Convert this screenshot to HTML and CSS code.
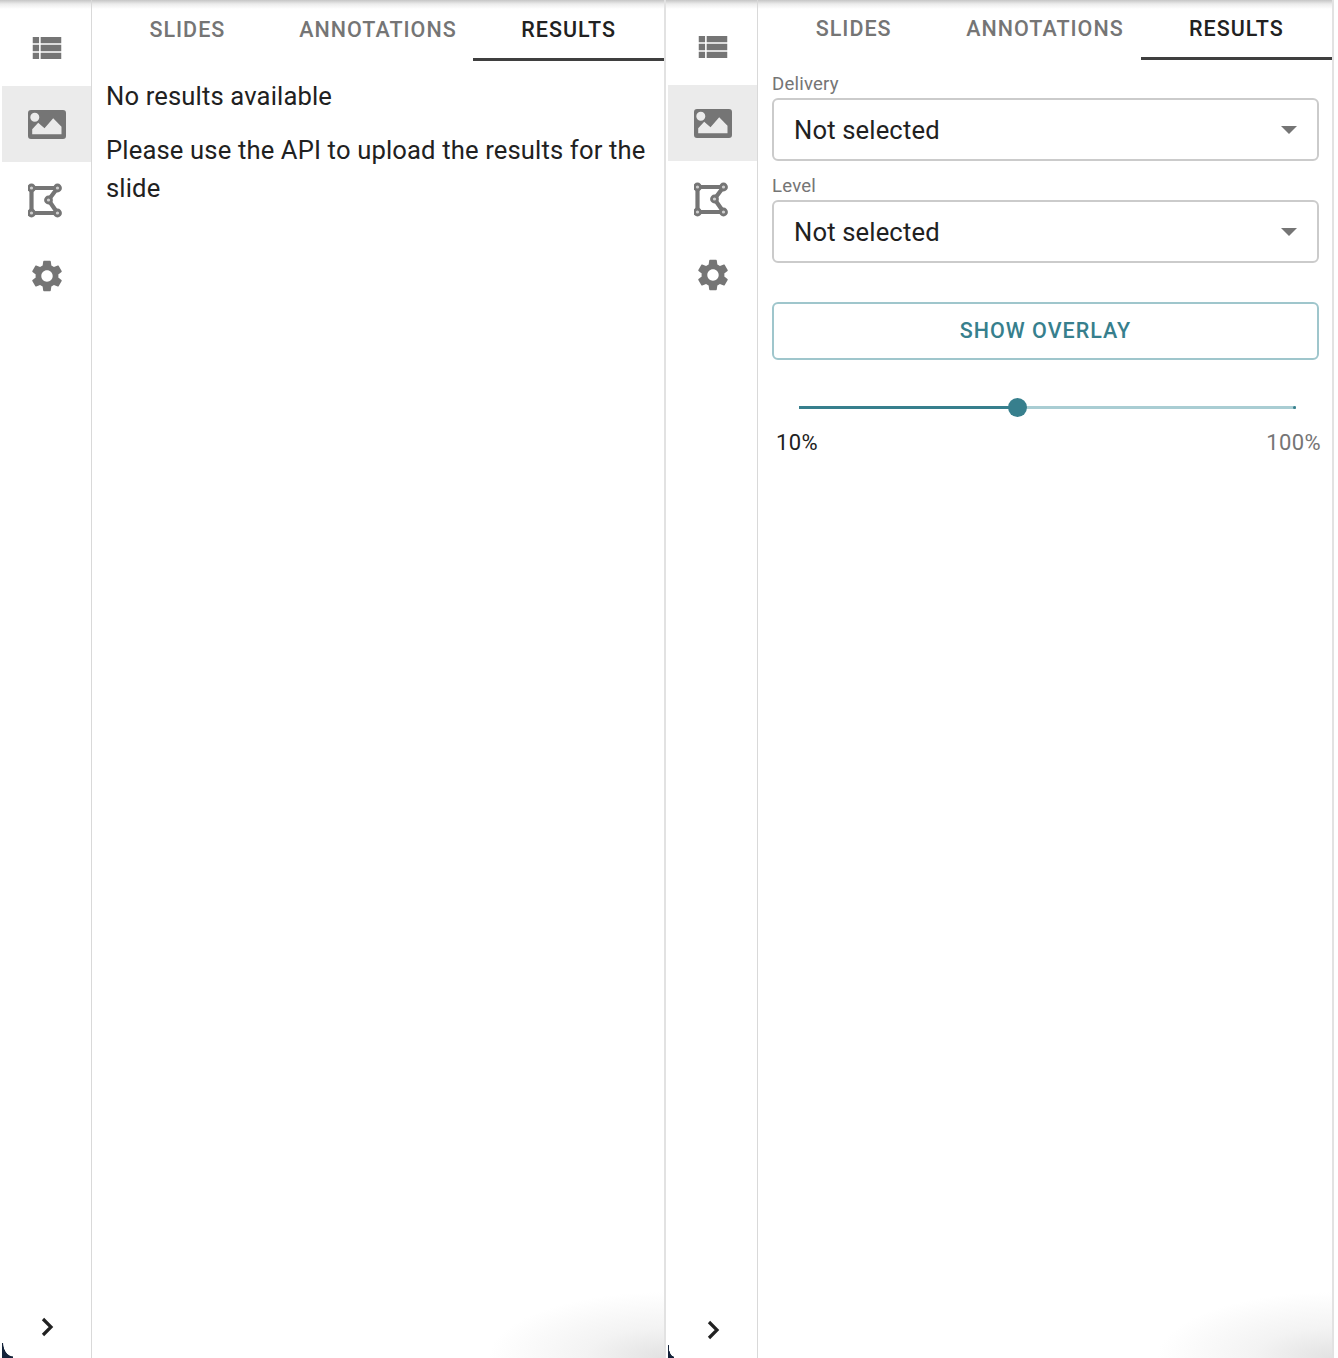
FILE: index.html
```html
<!DOCTYPE html>
<html lang="en">
<head>
<meta charset="utf-8">
<title>Results panels</title>
<link rel="stylesheet" href="styles.css">
</head>
<body>
<svg class="defs" width="0" height="0" aria-hidden="true">
  <symbol id="i-list" viewBox="0 0 24 24"><path d="M3 14h4v-4H3v4zm0 5h4v-4H3v4zM3 9h4V5H3v4zm5 5h13v-4H8v4zm0 5h13v-4H8v4zM8 5v4h13V5H8z"/></symbol>
  <symbol id="i-image" viewBox="0 0 38 38">
    <path fill-rule="evenodd" d="M3 5h32a3 3 0 0 1 3 3v23a3 3 0 0 1-3 3H3a3 3 0 0 1-3-3V8a3 3 0 0 1 3-3zM4.200 29.300h29.300v-7.600l-8.300-8.400-8.700 10-6.300-5.600-6 6.600zM6.800 7.800a4.500 4.500 0 1 0 0 9 4.500 4.500 0 0 0 0-9z"/>
  </symbol>
  <symbol id="i-poly" viewBox="0 0 38 38">
    <path class="poly-line" d="M3.500 7H29.500L20.500 19L29.500 32H3.500Z"/>
    <g class="poly-node"><circle cx="3.500" cy="7" r="3"/><circle cx="29.500" cy="7" r="3"/><circle cx="20.500" cy="19" r="3"/><circle cx="29.500" cy="32" r="3"/><circle cx="3.500" cy="32" r="3"/></g>
  </symbol>
  <symbol id="i-gear" viewBox="0 0 24 24"><path d="M19.140 12.940c.04-.3.060-.61.060-.94 0-.32-.02-.64-.07-.94l2.030-1.580c.18-.14.230-.41.120-.61l-1.920-3.320c-.12-.22-.37-.29-.59-.22l-2.390.96c-.5-.38-1.030-.7-1.620-.94L14.400 2.810c-.04-.24-.24-.41-.48-.41h-3.840c-.24 0-.43.170-.47.410L9.250 5.350c-.59.24-1.130.570-1.620.94l-2.390-.96c-.22-.08-.47 0-.59.220L2.740 8.870c-.12.210-.08.470.12.610l2.030 1.580c-.05.3-.09.630-.09.940s.02.640.07.940l-2.030 1.580c-.18.140-.23.410-.12.610l1.920 3.320c.12.220.37.290.59.220l2.390-.96c.5.380 1.030.7 1.620.94l.36 2.540c.05.240.24.410.48.410h3.840c.24 0 .44-.17.47-.41l.36-2.540c.59-.24 1.130-.56 1.620-.94l2.390.96c.22.080.47 0 .59-.22l1.920-3.320c.12-.22.070-.47-.12-.61l-2.010-1.580zM12 15.600c-1.980 0-3.600-1.620-3.600-3.600s1.620-3.600 3.600-3.600 3.600 1.620 3.600 3.600-1.620 3.600-3.600 3.600z"/></symbol>
  <symbol id="i-chevron" viewBox="0 0 38 38"><path class="chevron-line" d="M15 11l8 8-8 8"/></symbol>
</svg>

<main class="page">
  <section class="panel panel-left">
    <nav class="rail">
      <div class="rail-item"><svg class="icon"><use href="#i-list"/></svg></div>
      <div class="rail-item rail-item-active"><svg class="icon"><use href="#i-image"/></svg></div>
      <div class="rail-item"><svg class="icon"><use href="#i-poly"/></svg></div>
      <div class="rail-item"><svg class="icon"><use href="#i-gear"/></svg></div>
      <div class="rail-toggle"><svg class="icon"><use href="#i-chevron"/></svg></div>
    </nav>
    <div class="content">
      <div class="tabs">
        <div class="tab">SLIDES</div>
        <div class="tab">ANNOTATIONS</div>
        <div class="tab tab-active">RESULTS</div>
      </div>
      <div class="message">
        <p>No results available</p>
        <p>Please use the API to upload the results for the slide</p>
      </div>
    </div>
  </section>

  <section class="panel panel-right">
    <nav class="rail">
      <div class="rail-item"><svg class="icon"><use href="#i-list"/></svg></div>
      <div class="rail-item rail-item-active"><svg class="icon"><use href="#i-image"/></svg></div>
      <div class="rail-item"><svg class="icon"><use href="#i-poly"/></svg></div>
      <div class="rail-item"><svg class="icon"><use href="#i-gear"/></svg></div>
      <div class="rail-toggle"><svg class="icon"><use href="#i-chevron"/></svg></div>
    </nav>
    <div class="content">
      <div class="tabs">
        <div class="tab">SLIDES</div>
        <div class="tab">ANNOTATIONS</div>
        <div class="tab tab-active">RESULTS</div>
      </div>
      <div class="form">
        <div class="field">
          <div class="field-label">Delivery</div>
          <div class="select"><span>Not selected</span><i class="caret"></i></div>
        </div>
        <div class="field">
          <div class="field-label">Level</div>
          <div class="select"><span>Not selected</span><i class="caret"></i></div>
        </div>
        <button class="overlay-button" type="button">SHOW OVERLAY</button>
        <div class="slider">
          <div class="slider-track">
            <div class="slider-fill" style="width:44%"><span class="slider-thumb"></span></div>
            <span class="slider-end"></span>
          </div>
        </div>
        <div class="slider-labels">
          <span class="slider-min">10%</span>
          <span class="slider-max">100%</span>
        </div>
      </div>
    </div>
  </section>
</main>
</body>
</html>
```
FILE: styles.css
```css
* { box-sizing: border-box; }

html, body {
  margin: 0;
  height: 100%;
  background: #fff;
}

body {
  font-family: Roboto, "Liberation Sans", sans-serif;
  color: #212121;
  overflow: hidden;
}

.defs { position: absolute; }

.page {
  display: flex;
  height: 1358px;
}

.panel {
  position: relative;
  display: flex;
  height: 1358px;
  padding-left: 2px;
  border-right: 2px solid #e2e2e2;
  background-image:
    linear-gradient(#c6c6c6 0, #ececec 4px, rgba(255, 255, 255, 0) 9px),
    radial-gradient(ellipse 100% 100% at 100% 100%, #e2e2e2 0, #f3f3f3 45%, rgba(255, 255, 255, 0) 100%);
  background-size: 100% 10px, 175px 66px;
  background-position: top left, bottom right;
  background-repeat: no-repeat;
}

.panel::after {
  content: "";
  position: absolute;
  left: 2px;
  bottom: 0;
}

.panel-left { width: 666px; }
.panel-left::after {
  width: 11px;
  height: 15px;
  background: radial-gradient(ellipse 11px 15px at 100% 0, rgba(20, 35, 58, 0) 86%, #14233a 92%);
}
.panel-right { width: 668px; }
.panel-right::after {
  width: 6px;
  height: 13px;
  background: radial-gradient(ellipse 6px 13px at 100% 0, rgba(20, 35, 58, 0) 86%, #14233a 92%);
}

.rail {
  display: flex;
  flex-direction: column;
  flex: none;
  width: 90px;
  padding-top: 10px;
  padding-bottom: 12px;
  border-right: 1px solid #d9d9d9;
}
.panel-right .rail {
  padding-top: 9px;
  padding-bottom: 9px;
}

.rail-item {
  display: flex;
  align-items: center;
  justify-content: center;
  height: 76px;
}
.rail-item-active { background: #ebebeb; }

.rail-toggle {
  display: flex;
  justify-content: center;
  margin-top: auto;
}

.icon {
  width: 38px;
  height: 38px;
  fill: #757575;
}

.poly-line {
  fill: none;
  stroke: #757575;
  stroke-width: 4.200;
  stroke-linejoin: round;
}
.poly-node circle {
  fill: #cfcfcf;
  stroke: #757575;
  stroke-width: 2.800;
}

.chevron-line {
  fill: none;
  stroke: #212121;
  stroke-width: 3.200;
}

.content {
  flex: 1;
  min-width: 0;
  display: flex;
  flex-direction: column;
}

.tabs {
  display: flex;
  height: 61px;
}
.panel-right .tabs { height: 60px; }

.tab {
  flex: 1;
  display: flex;
  align-items: center;
  justify-content: center;
  padding-bottom: 3px;
  font-size: 21.500px;
  font-weight: 500;
  letter-spacing: 1px;
  color: #757575;
}
.tab-active {
  color: #212121;
  padding-bottom: 0;
  border-bottom: 3px solid #3f3f3f;
}

.message {
  padding: 16px 12px 0 14px;
  font-size: 25.600px;
  line-height: 38px;
  letter-spacing: 0.150px;
}
.message p { margin: 0 0 16px; }

.form {
  display: flex;
  flex-direction: column;
  padding: 13px 13px 0 14px;
}

.field { margin-bottom: 14px; }

.field-label {
  height: 25px;
  font-size: 18.600px;
  line-height: 23px;
  letter-spacing: 0.200px;
  color: #757575;
}

.select {
  display: flex;
  align-items: center;
  justify-content: space-between;
  height: 63px;
  padding: 0 20px 0 20px;
  border: 2px solid #cbcbcb;
  border-radius: 6px;
  font-size: 25.600px;
  letter-spacing: 0.150px;
}

.caret {
  width: 0;
  height: 0;
  border-left: 8px solid transparent;
  border-right: 8px solid transparent;
  border-top: 8px solid #757575;
}

.overlay-button {
  height: 58px;
  margin-top: 25px;
  padding: 0 0 1px;
  border: 2px solid #9fc6cc;
  border-radius: 6px;
  background: transparent;
  color: #377f8d;
  font-family: inherit;
  font-size: 21.500px;
  font-weight: 500;
  letter-spacing: 1px;
}

.slider {
  padding: 46px 23px 0 27px;
}

.slider-track {
  position: relative;
  height: 3px;
  background: #a9cdd3;
}

.slider-fill {
  position: relative;
  height: 100%;
  background: #377f8d;
}

.slider-thumb {
  position: absolute;
  right: -9px;
  top: -8px;
  width: 19px;
  height: 19px;
  border-radius: 50%;
  background: #377f8d;
}

.slider-end {
  position: absolute;
  right: 0;
  top: 0;
  width: 3px;
  height: 3px;
  border-radius: 50%;
  background: #377f8d;
}

.slider-labels {
  display: flex;
  justify-content: space-between;
  margin: 22px -2px 0 4px;
  font-size: 22px;
  line-height: 24px;
  letter-spacing: 0.400px;
}
.slider-max { color: #757575; }
```
